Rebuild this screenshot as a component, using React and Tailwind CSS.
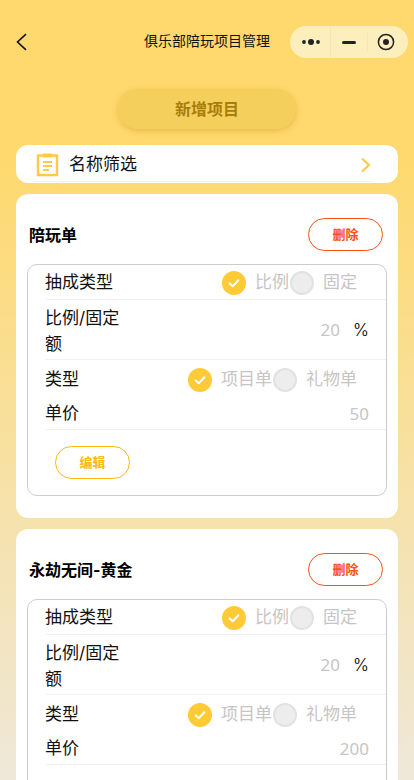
import React from "react";

function Check({ on }) {
  return on ? (
    <span className="flex h-6 w-6 shrink-0 items-center justify-center rounded-full bg-[#ffca38]">
      <svg width="14" height="14" viewBox="0 0 14 14" fill="none">
        <path d="M2.6 7.4 L5.7 10.2 L11.4 4.2" stroke="#fff" strokeWidth="2" strokeLinecap="round" strokeLinejoin="round" />
      </svg>
    </span>
  ) : (
    <span className="h-6 w-6 shrink-0 rounded-full border-2 border-[#e2e2e2] bg-[#ededed]" />
  );
}

function Option({ on, text }) {
  return (
    <span className={on ? "mr-[1px] flex items-center" : "flex items-center"}>
      <Check on={on} />
      <span className="ml-[9px] text-[17px] text-[#c8c4c4]">{text}</span>
    </span>
  );
}

function Detail({ price }) {
  return (
    <div className="h-[232px] rounded-[10px] border border-[#cccccc] pl-[17px]">
      <div className="flex h-[35px] items-center justify-between border-b border-[#f1f1f1] pr-[29px] pt-[2px]">
        <span className="text-[17px] text-[#111]">抽成类型</span>
        <div className="flex">
          <Option on text="比例" />
          <Option text="固定" />
        </div>
      </div>
      <div className="flex h-[60px] items-center justify-between border-b border-[#f1f1f1] pr-[17px] pt-[2px]">
        <span className="w-[85px] text-[17px] leading-[26px] text-[#111]">比例/固定额</span>
        <div className="flex items-center">
          <span className="mb-[1px] text-[17px] text-[#c8c4c4] [font-family:'Noto_Sans',sans-serif]">20</span>
          <span className="ml-[13px] text-[17px] font-light text-black">%</span>
        </div>
      </div>
      <div className="flex h-[37px] items-center justify-between pr-[29px] pt-[2px]">
        <span className="text-[17px] text-[#111]">类型</span>
        <div className="flex">
          <Option on text="项目单" />
          <Option text="礼物单" />
        </div>
      </div>
      <div className="flex h-[33px] items-center justify-between border-b border-[#f1f1f1] pr-[17px] pt-[2px]">
        <span className="text-[17px] text-[#111]">单价</span>
        <span className="mb-[1px] text-[17px] text-[#c8c4c4] [font-family:'Noto_Sans',sans-serif]">{price}</span>
      </div>
      <button className="ml-[10px] mt-[16px] flex h-[33px] w-[75px] items-center justify-center rounded-full border border-[#fbb90f] text-[13px] font-bold text-[#fbb90f]">
        编辑
      </button>
    </div>
  );
}

function Card({ title, price }) {
  return (
    <section className="mx-4 mt-[11px] h-[324px] rounded-xl bg-white px-[11px] pt-6">
      <div className="flex h-[33px] items-center justify-between pl-[2px] pr-1">
        <span className="text-base font-bold text-black">{title}</span>
        <button className="flex h-[33px] w-[75px] items-center justify-center rounded-full border border-[#fb5210] text-[13px] font-bold text-[#fb5210]">
          删除
        </button>
      </div>
      <div className="mt-[13px]">
        <Detail price={price} />
      </div>
    </section>
  );
}

export default function App() {
  return (
    <div className="h-[780px] overflow-hidden bg-linear-to-b/srgb from-[#ffd96e] from-[20%] to-[#efe8d9]">
      <div className="[font-family:Inter,'Noto_Sans_CJK_SC',sans-serif]">
        <header className="relative flex h-[82px] items-center justify-center">
          <svg className="absolute left-[15px] top-[33px]" width="14" height="18" viewBox="0 0 14 18" fill="none">
            <path d="M11 1.2 L2.5 9 L11 16.8" stroke="#111" strokeWidth="1.6" />
          </svg>
          <h1 className="text-sm font-normal text-[#111]">俱乐部陪玩项目管理</h1>
          <div className="absolute left-[290px] top-[26px] flex h-8 w-[118px] items-center rounded-full bg-[#fdefbd]">
            <div className="flex w-[41px] items-center justify-center border-r border-[#f6e6b0] py-2 pl-[2px]">
              <svg width="20" height="16" viewBox="0 0 20 16" fill="#222">
                <circle cx="3" cy="8" r="1.9" />
                <circle cx="10" cy="8" r="3" />
                <circle cx="17" cy="8" r="1.9" />
              </svg>
            </div>
            <div className="flex w-[37px] items-center justify-center border-r border-[#f6e6b0] py-2">
              <span className="h-[3px] w-[14px] rounded-sm bg-[#222]" />
            </div>
            <div className="flex flex-1 items-center justify-center pr-[5px]">
              <svg width="18" height="18" viewBox="0 0 18 18" fill="none">
                <circle cx="9" cy="9" r="7.6" stroke="#222" strokeWidth="1.5" />
                <circle cx="9" cy="9" r="3" fill="#222" />
              </svg>
            </div>
          </div>
        </header>

        <button className="mx-auto mt-[7px] flex h-10 w-[178px] items-center justify-center rounded-full bg-[#f5cf5b] text-base font-bold text-[#a87c0e] shadow-[0_2px_6px_rgba(190,140,30,0.4)]">
          新增项目
        </button>

        <div className="mx-4 mt-4 h-[38px] rounded-xl bg-white pl-[19px] pr-[26px]">
          <div className="flex h-[37px] items-center border-b border-[#f0f0f0] pt-[3px]">
            <svg width="23" height="25" viewBox="0 0 23 25" fill="none" className="mb-[1px] ml-[1px]">
              <path d="M7 3.5 H2 V23 H21 V3.5 H16" stroke="#ffc94a" strokeWidth="2.4" />
              <rect x="7" y="1.5" width="9" height="4" fill="#ffc94a" />
              <path d="M7 10 H16 M7 14 H16 M7 18 H13" stroke="#ffc94a" strokeWidth="1.8" />
            </svg>
            <span className="ml-[10px] text-[17px] text-[#111]">名称筛选</span>
            <svg className="ml-auto" width="12" height="16" viewBox="0 0 12 16" fill="none">
              <path d="M2 1.5 L9 8 L2 14.5" stroke="#ffc94a" strokeWidth="2.2" />
            </svg>
          </div>
        </div>

        <Card title="陪玩单" price="50" />
        <Card title="永劫无间-黄金" price="200" />
      </div>
    </div>
  );
}
